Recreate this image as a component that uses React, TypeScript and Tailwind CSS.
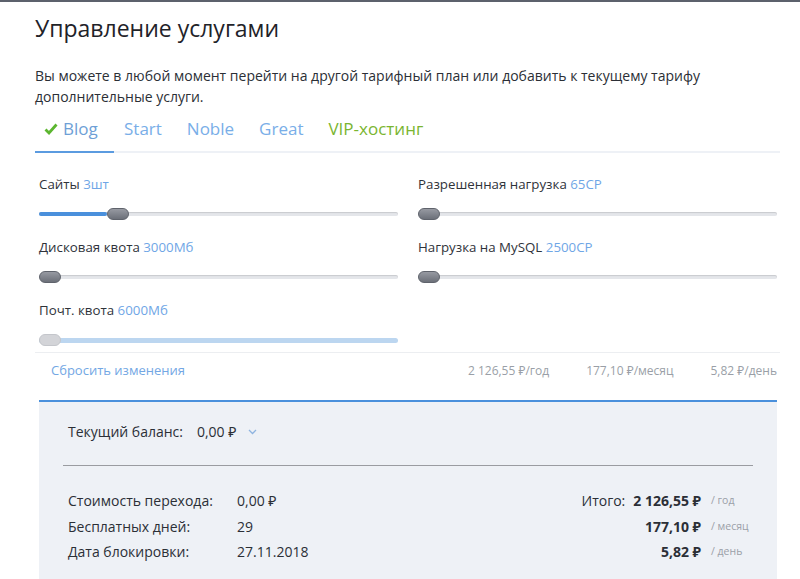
import React from 'react';

const font = { fontFamily: '"Open Sans", "Noto Sans", sans-serif' };

interface SliderProps {
    label: string;
    value: string;
    percent: number;
    disabled?: boolean;
}

function Slider({ label, value, percent, disabled }: SliderProps) {
    return (
        <div className="flex flex-col">
            <div className="h-[18px] text-[13.3px] leading-[18px] text-[#2f333a]">
                {label} <span className="text-[#6fa6e6]">{value}</span>
            </div>
            <div className="relative mt-[15px] h-[12px] flex items-center">
                <div
                    className={
                        disabled
                            ? 'w-full h-[5px] rounded-full bg-[#bcd6f0]'
                            : 'w-full h-[4px] rounded-full bg-[#e4e6ea] shadow-[inset_0_1px_1px_rgba(0,0,0,0.12)]'
                    }
                />
                {percent > 0 && (
                    <div
                        className="absolute left-0 h-[4px] rounded-full bg-[#4a90dc]"
                        style={{ width: `${percent}%` }}
                    />
                )}
                <div
                    className={
                        disabled
                            ? 'absolute top-0 w-[22px] h-[12px] rounded-full bg-[#d3d4d8] border border-[#c4c6cb]'
                            : 'absolute top-0 w-[22px] h-[12px] rounded-full bg-gradient-to-b from-[#979aa2] to-[#6c7079] border border-[#5f636c]'
                    }
                    style={{ left: `${percent}%` }}
                />
            </div>
        </div>
    );
}

export default function App() {
    return (
        <div className="w-full h-[579px] overflow-hidden bg-white border-t-2 border-[#5c616c]" style={font}>
            <div className="pl-[35px] pr-[20px]">
                {/* Header */}
                <h1 className="mt-[11px] text-[23px] leading-[30px] font-normal text-[#1f2329]">
                    Управление услугами
                </h1>
                <p className="mt-[22px] text-[14px] leading-[21px] text-[#2b2f36]">
                    Вы можете в любой момент перейти на другой тарифный план или добавить к текущему тарифу
                    <br />
                    дополнительные услуги.
                </p>

                {/* Tabs */}
                <div className="mt-[10px] flex items-end border-b-2 border-[#eef1f6] text-[17px] leading-[24px]">
                    <div className="w-[79px] pl-[9px] pb-[10px] -mb-[2px] border-b-2 border-[#5b9be0] flex items-center gap-[5px] text-[#6e9fd6]">
                        <svg width="14" height="12" viewBox="0 0 14 12">
                            <path d="M1.5 6.5 L5 10 L12.5 1.5" fill="none" stroke="#5cb630" strokeWidth="2.8" />
                        </svg>
                        Blog
                    </div>
                    <div className="pl-[10px] pb-[10px] flex gap-[25px] text-[#79aee8]">
                        <span>Start</span>
                        <span>Noble</span>
                        <span>Great</span>
                        <span className="text-[#7ab530]">VIP-хостинг</span>
                    </div>
                </div>

                {/* Sliders */}
                <div className="mt-[22px] ml-[4px] mr-[3px] grid grid-cols-2 gap-x-[20px] gap-y-[18px]">
                    <Slider label="Сайты" value="3шт" percent={19} />
                    <Slider label="Разрешенная нагрузка" value="65CP" percent={0} />
                    <Slider label="Дисковая квота" value="3000Мб" percent={0} />
                    <Slider label="Нагрузка на MySQL" value="2500CP" percent={0} />
                    <Slider label="Почт. квота" value="6000Мб" percent={0} disabled />
                </div>

                <div className="mt-[6px] border-t border-[#eceef1]" />

                {/* Reset + prices */}
                <div className="flex items-center h-[35px] pl-[16px] pr-[3px]">
                    <span className="text-[13px] text-[#73a7e4]">Сбросить изменения</span>
                    <div className="ml-auto flex gap-[37px] text-[12px] text-[#9a9fa7]">
                        <span>2 126,55 ₽/год</span>
                        <span>177,10 ₽/месяц</span>
                        <span>5,82 ₽/день</span>
                    </div>
                </div>

                {/* Summary panel */}
                <div className="mt-[12px] ml-[4px] mr-[3px] bg-[#eef1f6] border-t-2 border-[#4a90dc] px-[24px] pb-[20px]">
                    <div className="pt-[19px] pl-[5px] flex items-center text-[14px] leading-[22px] text-[#2b2f36]">
                        <span>Текущий баланс:</span>
                        <span className="ml-[14px]">0,00 ₽</span>
                        <svg className="ml-[12px]" width="9" height="6" viewBox="0 0 9 6">
                            <path d="M1 1 L4.5 4.5 L8 1" fill="none" stroke="#8fb4e0" strokeWidth="1.3" />
                        </svg>
                    </div>
                    <div className="mt-[22px] border-t border-[#9a9ca1]" />

                    <div className="mt-[22px] pl-[5px] flex text-[14px] leading-[25.5px] text-[#2b2f36]">
                        <div className="flex flex-col w-[169px]">
                            <span>Стоимость перехода:</span>
                            <span>Бесплатных дней:</span>
                            <span>Дата блокировки:</span>
                        </div>
                        <div className="flex flex-col">
                            <span>0,00 ₽</span>
                            <span>29</span>
                            <span>27.11.2018</span>
                        </div>
                        <div className="ml-auto flex">
                            <div className="flex flex-col items-end">
                                <span>
                                    Итого:<b className="ml-[8px] font-bold">2 126,55 ₽</b>
                                </span>
                                <b className="font-bold">177,10 ₽</b>
                                <b className="font-bold">5,82 ₽</b>
                            </div>
                            <div className="w-[42px] ml-[10px] flex flex-col text-[10.5px] text-[#9ba0a8]">
                                <span>/ год</span>
                                <span>/ месяц</span>
                                <span>/ день</span>
                            </div>
                        </div>
                    </div>
                </div>
            </div>
        </div>
    );
}
